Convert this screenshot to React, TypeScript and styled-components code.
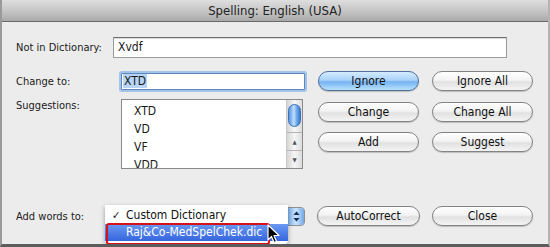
import React, {FC} from 'react';
import styled, {createGlobalStyle, css} from 'styled-components';

const GlobalStyle = createGlobalStyle`
    html, body {
        margin: 0;
        padding: 0;
        background: #ececec;
    }
    body {
        font-family: "DejaVu Sans Condensed", "DejaVu Sans", sans-serif;
        font-size: 11px;
        color: #1a1a1a;
    }
`;

const suggestions = ['XTD', 'VD', 'VF', 'VDD'];

const App: FC = () => {
    return <>
        <GlobalStyle/>
        <Window>
            <TitleBar>Spelling: English (USA)</TitleBar>
            <Body>
                <TopRow>
                    <Label width={97}>Not in Dictionary:</Label>
                    <Field width={394}>Xvdf</Field>
                </TopRow>

                <MainArea>
                    <FormGrid>
                        <Label>Change to:</Label>
                        <FocusField><Selected>XTD</Selected></FocusField>
                        <Label $top>Suggestions:</Label>
                        <List>
                            <Items>
                                {suggestions.map(s => <Item key={s}>{s}</Item>)}
                            </Items>
                            <ScrollBar>
                                <Track><Thumb/></Track>
                                <ArrowBtn>▲</ArrowBtn>
                                <ArrowBtn>▼</ArrowBtn>
                            </ScrollBar>
                        </List>
                    </FormGrid>

                    <ButtonGrid>
                        <AquaButton $primary>Ignore</AquaButton>
                        <AquaButton>Ignore All</AquaButton>
                        <AquaButton>Change</AquaButton>
                        <AquaButton>Change All</AquaButton>
                        <AquaButton>Add</AquaButton>
                        <AquaButton>Suggest</AquaButton>
                    </ButtonGrid>
                </MainArea>

                <BottomRow>
                    <Label width={89}>Add words to:</Label>
                    <PopupWrap>
                        <PopupButton>
                            <PopupArrows>
                                <svg width="7" height="11" viewBox="0 0 7 11">
                                    <path d="M3.5 0.5 L6.5 4 L0.5 4 Z" fill="#1b2a44"/>
                                    <path d="M3.5 10.5 L6.5 7 L0.5 7 Z" fill="#1b2a44"/>
                                </svg>
                            </PopupArrows>
                        </PopupButton>
                        <Menu>
                            <MenuItem><Check>✓</Check>Custom Dictionary</MenuItem>
                            <MenuItem $active>
                                Raj&amp;Co-MedSpelChek.dic
                                <RedMark/>
                            </MenuItem>
                        </Menu>
                        <Cursor width="13" height="20" viewBox="0 0 13 20">
                            <path d="M1 1 L1 16 L4.5 12.5 L7 18.5 L9.5 17.5 L7 11.5 L12 11.5 Z"
                                  fill="#000" stroke="#fff" strokeWidth="1.2" strokeLinejoin="round"/>
                        </Cursor>
                    </PopupWrap>
                    <BottomButtons>
                        <AquaButton width={103}>AutoCorrect</AquaButton>
                        <AquaButton width={101}>Close</AquaButton>
                    </BottomButtons>
                </BottomRow>
            </Body>
        </Window>
    </>
}

export default App;

const Window = styled.div({
    width: 550,
    height: 247,
    boxSizing: 'border-box',
    borderLeft: '2px solid #9a9a9a',
    borderRight: '2px solid #b4b4b4',
    borderBottom: '3px solid #5c5c5c',
    background: '#ececec',
    overflow: 'hidden',
    display: 'flex',
    flexDirection: 'column',
})

const TitleBar = styled.div({
    height: 21,
    flexShrink: 0,
    background: 'linear-gradient(#dedede, #c4c4c4 55%, #a9a9a9)',
    borderBottom: '1px solid #6a6a6a',
    textAlign: 'center',
    lineHeight: '22px',
    fontSize: 13,
    color: '#222',
    marginLeft: -2,
    marginRight: -2,
})

const Body = styled.div({
    padding: '15px 0 0 14px',
    display: 'flex',
    flexDirection: 'column',
})

const TopRow = styled.div({
    display: 'flex',
    alignItems: 'center',
})

const Label = styled.div<{ width?: number, $top?: boolean }>`
    flex-shrink: 0;
    width: ${p => p.width ? p.width + 'px' : 'auto'};
    ${p => p.$top && css`align-self: start; padding-top: 0px;`}
`

const Field = styled.div<{ width: number }>`
    width: ${p => p.width}px;
    height: 21px;
    box-sizing: border-box;
    background: #fff;
    border: 1px solid #9b9b9b;
    border-top-color: #6f6f6f;
    box-shadow: inset 0 1px 1px rgba(0, 0, 0, 0.15);
    padding: 0 4px;
    line-height: 19px;
    font-size: 12px;
`

const MainArea = styled.div({
    display: 'flex',
    marginTop: 13,
    gap: 11,
})

const FormGrid = styled.div({
    display: 'grid',
    gridTemplateColumns: '103px 188px',
    gridTemplateRows: '21px auto',
    rowGap: 7,
    alignItems: 'center',
})

const FocusField = styled.div({
    margin: '0 2px',
    height: 17,
    boxSizing: 'border-box',
    border: '1px solid #5f87bd',
    boxShadow: '0 0 0 2px #a4c3e8',
    borderRadius: 1,
    background: '#fff',
    lineHeight: '15px',
    fontSize: 12,
    paddingLeft: 1,
})

const Selected = styled.span({
    background: '#b6d5f8',
    padding: '0 1px',
})

const List = styled.div({
    marginLeft: 2,
    width: 182,
    height: 70,
    boxSizing: 'border-box',
    border: '1px solid #8a8a8a',
    background: '#fff',
    display: 'flex',
    overflow: 'hidden',
})

const Items = styled.div({
    flex: 1,
    paddingTop: 2,
    paddingLeft: 12,
})

const Item = styled.div({
    height: 18,
    lineHeight: '18px',
    fontSize: 12,
})

const ScrollBar = styled.div({
    width: 15,
    borderLeft: '1px solid #c8c8c8',
    background: 'linear-gradient(90deg, #d6d6d6, #f6f6f6 50%, #dcdcdc)',
    display: 'flex',
    flexDirection: 'column',
})

const Track = styled.div({
    height: 34,
    padding: '4px 1px 0',
    boxSizing: 'border-box',
})

const Thumb = styled.div({
    height: 21,
    borderRadius: 7,
    border: '1px solid #3a70b8',
    background: 'linear-gradient(90deg, #5c95de, #bfe0ff 45%, #6fa8ea 70%, #3a78cc)',
})

const ArrowBtn = styled.div({
    height: 17,
    borderTop: '1px solid #b5b5b5',
    fontSize: 6,
    textAlign: 'center',
    lineHeight: '17px',
    color: '#555',
})

const ButtonGrid = styled.div({
    display: 'grid',
    gridTemplateColumns: '101px 101px',
    gridAutoRows: '20px',
    columnGap: 13,
    rowGap: 10.5,
    alignContent: 'start',
})

const AquaButton = styled.div<{ $primary?: boolean, width?: number }>`
    ${p => p.width && css`width: ${p.width}px;`}
    height: 20px;
    box-sizing: border-box;
    border-radius: 10px;
    border: 1px solid #838383;
    text-align: center;
    line-height: 18px;
    font-size: 12px;
    color: #111;
    background: linear-gradient(#ffffff, #f3f3f3 45%, #e1e1e1 55%, #f4f4f4);
    box-shadow: 0 1px 1px rgba(0, 0, 0, 0.2);
    ${p => p.$primary && css`
        border-color: #4f6f9c;
        background: linear-gradient(#d4ebff, #a9d2fa 45%, #75b3f1 55%, #b9e1ff);
    `}
`

const BottomRow = styled.div({
    display: 'flex',
    alignItems: 'center',
    marginTop: 37,
})

const PopupWrap = styled.div({
    position: 'relative',
    width: 200,
})

const PopupButton = styled.div({
    height: 19,
    boxSizing: 'border-box',
    border: '1px solid #8f8f8f',
    borderRadius: 4,
    background: 'linear-gradient(#fff, #ededed)',
    display: 'flex',
    justifyContent: 'flex-end',
    overflow: 'hidden',
})

const PopupArrows = styled.div({
    width: 16,
    display: 'flex',
    alignItems: 'center',
    justifyContent: 'center',
    borderLeft: '1px solid #6e8fbd',
    background: 'linear-gradient(90deg, #7fb2ea, #c9e4ff 50%, #72a9e6)',
})

const Menu = styled.div({
    position: 'absolute',
    left: 0,
    top: -2,
    width: 183,
    height: 39,
    boxSizing: 'border-box',
    paddingTop: 2,
    background: 'rgba(255,255,255,0.97)',
    borderRadius: '0 0 4px 4px',
    boxShadow: '0 2px 5px rgba(0,0,0,0.35)',
})

const MenuItem = styled.div<{ $active?: boolean }>`
    position: relative;
    height: 17px;
    line-height: 17px;
    padding-left: 21px;
    font-size: 12px;
    color: #111;
    ${p => p.$active && css`
        color: #fff;
        background: linear-gradient(#6a98f2, #3565de);
    `}
`

const Check = styled.span({
    position: 'absolute',
    left: 7,
    fontSize: 11,
})

const RedMark = styled.span({
    position: 'absolute',
    left: 1,
    top: -1,
    width: 160,
    height: 18,
    border: '2px solid #d5121c',
    borderRadius: 3,
})

const Cursor = styled.svg({
    position: 'absolute',
    left: 162,
    top: 17,
})

const BottomButtons = styled.div({
    display: 'flex',
    gap: 12,
    marginLeft: 12,
})
